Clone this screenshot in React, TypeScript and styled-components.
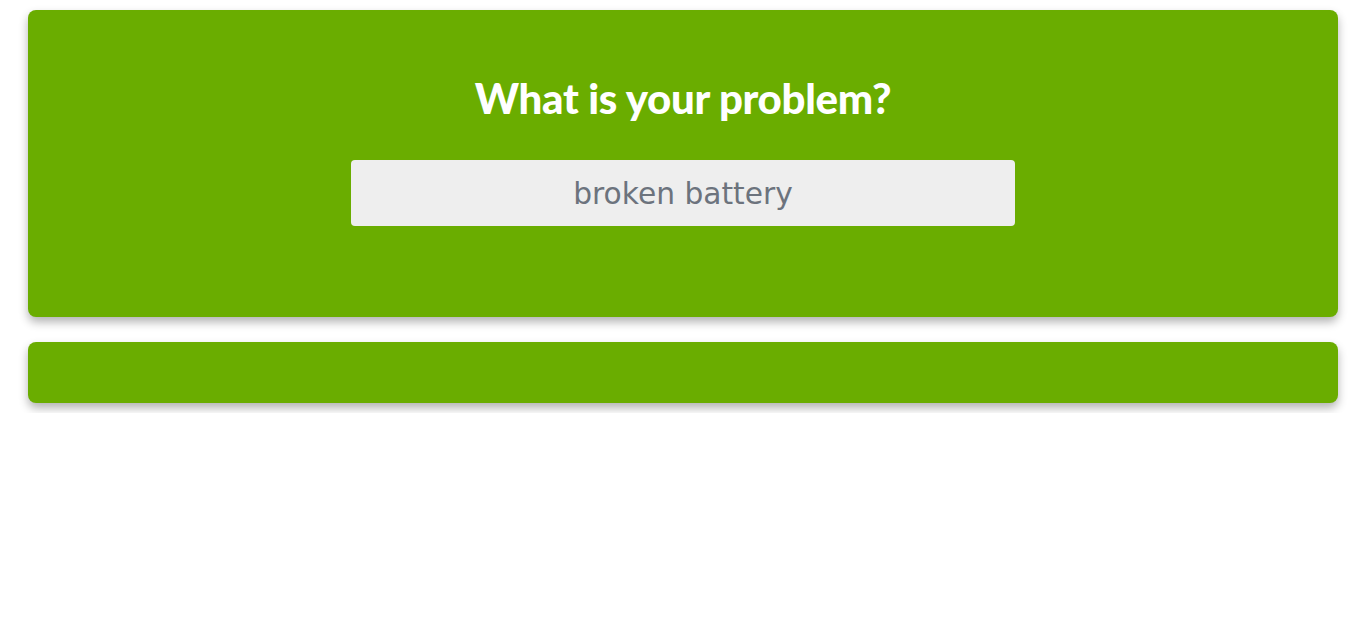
import React from "react";
import styled, { createGlobalStyle } from "styled-components";

const Global = createGlobalStyle`
  html, body { margin: 0; padding: 0; background: #fff; }
  body { font-family: "DejaVu Sans", sans-serif; }
`;

const Page = styled.div`
  display: flex;
  flex-direction: column;
  gap: 25px;
  padding: 10px 28px;
`;

const Card = styled.section<{ $tall?: boolean }>`
  background: #6aad00;
  border-radius: 8px;
  box-shadow: 0 5px 10px rgba(0, 0, 0, 0.3);
  display: flex;
  flex-direction: column;
  align-items: center;
  height: ${(p) => (p.$tall ? "307px" : "61px")};
  box-sizing: border-box;
  padding-top: ${(p) => (p.$tall ? "63px" : "0")};
`;

const Title = styled.h1`
  margin: 0 0 37px;
  color: #fff;
  font-family: Lato, "Open Sans", sans-serif;
  font-weight: 900;
  font-size: 42px;
  line-height: 50px;
  letter-spacing: -0.3px;
`;

const Input = styled.input`
  width: 664px;
  height: 66px;
  box-sizing: border-box;
  border: none;
  border-radius: 4px;
  background: #eeeeee;
  text-align: center;
  font-family: "DejaVu Sans", sans-serif;
  font-size: 29.7px;
  color: #495057;
  outline: none;
  &::placeholder { color: #6c737d; }
`;

export default function App() {
  return (
    <>
      <Global />
      <Page>
        <Card $tall>
          <Title>What is your problem?</Title>
          <Input placeholder="broken battery" />
        </Card>
        <Card />
      </Page>
    </>
  );
}
